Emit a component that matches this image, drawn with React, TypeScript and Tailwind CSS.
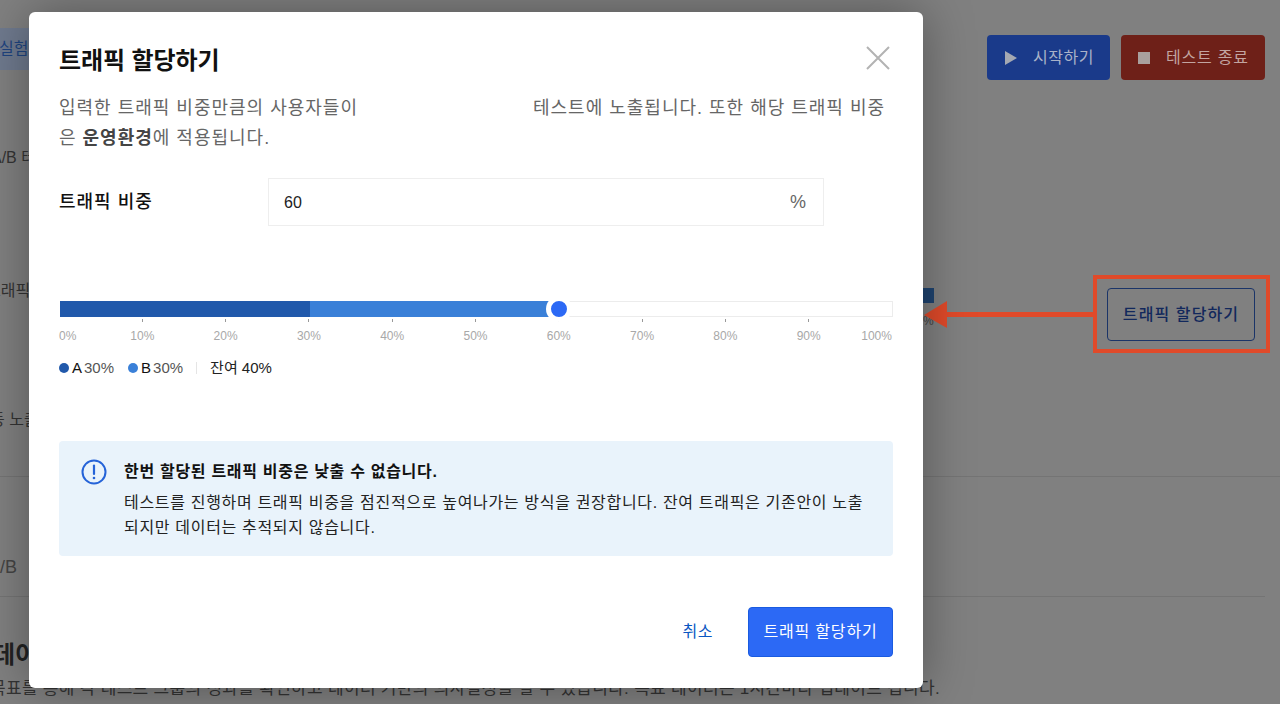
import React from "react";

const ticks = ["0%","10%","20%","30%","40%","50%","60%","70%","80%","90%","100%"];

function Scale() {
  return (
    <div className="flex justify-between w-[833px] mt-[2px]">
      {ticks.map((t, i) => (
        <div key={t} className={"w-0 flex flex-col " + (i === 0 ? "items-start" : i === 10 ? "items-end" : "items-center")}>
          <div className={"w-[1px] h-[3px] bg-[#999] " + (i === 0 || i === 10 ? "opacity-0" : "")} />
          <div className={"text-[12px] leading-[16px] mt-[6px] text-[#a8a8a8] whitespace-nowrap " + (i === 0 ? "ml-[0px]" : "")}>{t}</div>
        </div>
      ))}
    </div>
  );
}

export default function App() {
  return (
    <div className="relative w-[1280px] h-[704px] overflow-hidden bg-[#808080] font-['Liberation_Sans','Noto_Sans_CJK_KR',sans-serif]">
      {/* page behind the dim layer */}
      <div className="h-[704px] flex flex-col text-[#2b2b2b] whitespace-nowrap">
        <div className="flex justify-between items-start pt-[28px] h-[142px] pr-[15px]">
          <div className="h-[42px] w-[40px] bg-[#6f7a8e] text-[#1e4480] text-[16px] leading-[42px] -ml-[1px]">실험</div>
          <div className="flex gap-[11px] mt-[7px]">
            <div className="w-[123px] h-[45px] rounded-[4px] bg-[#1a3a8a] flex items-center pl-[18px] gap-[16px] text-[#a9b2c8] text-[16px] tracking-[0.5px]">
              <svg width="12" height="14" viewBox="0 0 12 14"><path d="M0 0 L12 7 L0 14 Z" fill="#a4a8b2" /></svg>
              <span>시작하기</span>
            </div>
            <div className="w-[144px] h-[45px] rounded-[4px] bg-[#6e2018] flex items-center pl-[17px] gap-[16px] text-[#c2a5a1] text-[16px] tracking-[0.8px]">
              <div className="w-[12px] h-[12px] bg-[#a9a09e]" />
              <span>테스트 종료</span>
            </div>
          </div>
        </div>
        <div className="h-[146px] text-[16px] leading-[32px] -ml-[9px] text-[#333]">A/B 테스트</div>
        <div className="h-[122px] flex justify-between items-start pr-[25px]">
          <div className="text-[16px] leading-[6px] -ml-[14px] text-[#333]">트래픽</div>
          <div className="flex items-start">
            <div className="mr-[173px] flex flex-col items-start">
              <div className="w-[11px] h-[15px] bg-[#1f4470]" />
              <div className="text-[12px] text-[#444] leading-[16px] mt-[10px]">%</div>
            </div>
            <div className="w-[148px] h-[53px] rounded-[4px] border border-[#1b3468] flex items-center justify-center text-[16px] font-medium text-[#12285c] tracking-[1.1px]">트래픽 할당하기</div>
          </div>
        </div>
        <div className="h-[66px] text-[16px] leading-[20px] -ml-[10px] text-[#333]">등 노출</div>
        <div className="h-[120px] border-t border-[#747474] pt-[74px] text-[18px] leading-[32px] text-[#444]">
          <div className="-ml-[12px]">A/B</div>
        </div>
        <div className="border-t border-[#747474] mr-[15px] pt-[40px] text-[24px] leading-[36px] font-bold text-[#222]">
          <div className="-ml-[7px]">데이</div>
          <div className="text-[17px] leading-[24px] font-normal text-[#333] mt-[4px] tracking-[0.3px] -ml-[10px]">
            목표를 통해 각 테스트 그룹의 성과를 확인하고 데이터 기반의 의사결정을 할 수 있습니다. 목표 데이터는 1시간마다 업데이트 됩니다.
          </div>
        </div>
      </div>

      {/* annotation */}
      <div className="absolute left-[1093px] top-[275px] w-[177px] h-[78px] border-[4px] border-[#e04a2a]" />
      <div className="absolute left-[940px] top-[312px] w-[153px] h-[5px] bg-[#e04a2a]" />
      <svg className="absolute left-[924px] top-[301px]" width="24" height="28" viewBox="0 0 24 28"><path d="M0 14 L23 0 L23 27 Z" fill="#e04a2a" /></svg>

      {/* modal */}
      <div className="absolute left-[29px] top-[12px] w-[894px] h-[676px] bg-white rounded-[6px] shadow-[0_0_50px_rgba(0,0,0,0.35)] px-[30px] whitespace-nowrap">
        <div className="flex justify-between items-start pt-[32px]">
          <h2 className="text-[24px] leading-[34px] font-semibold text-[#111] tracking-[-0.1px]">트래픽 할당하기</h2>
          <svg className="mt-[2px] mr-[3px]" width="24" height="24" viewBox="0 0 24 24" fill="none" stroke="#b3b3b3" strokeWidth="2"><path d="M1 1 L23 23 M23 1 L1 23" /></svg>
        </div>
        <div className="mt-[15px] text-[18px] leading-[30px] text-[#666] tracking-[1px]">
          <div className="flex">
            <span>입력한 트래픽 비중만큼의 사용자들이</span>
            <span className="w-[175px]" />
            <span>테스트에 노출됩니다. 또한 해당 트래픽 비중</span>
          </div>
          <div>은 <b className="font-bold text-[#444]">운영환경</b>에 적용됩니다.</div>
        </div>
        <div className="flex items-center mt-[25px]">
          <div className="w-[209px] text-[18px] font-medium text-[#111] tracking-[1px] pt-[1px]">트래픽 비중</div>
          <div className="w-[556px] h-[48px] border border-[#eeeeee] flex items-center justify-between pl-[15px] pr-[17px] text-[16px] pt-[1px]">
            <span className="text-[#222]">60</span>
            <span className="text-[#666] text-[18px]">%</span>
          </div>
        </div>

        <div className="mt-[75px] ml-[1px] relative w-[833px] h-[16px] border border-[#ececec] flex">
          <div className="w-[250px] bg-[#2159ab] -my-[1px] -ml-[1px]" />
          <div className="w-[245px] bg-[#3a80d8] -my-[1px]" />
          <div className="absolute left-[485px] -top-[6px] w-[26px] h-[26px] rounded-full bg-[#2c69f5] border-[5px] border-white" />
        </div>
        <Scale />

        <div className="flex items-center mt-[14px] text-[15px] leading-[20px] text-[#555]">
          <span className="w-[10px] h-[10px] rounded-full bg-[#2159ab]" />
          <span className="ml-[3px] text-[#111]">A</span>
          <span className="ml-[2px]">30%</span>
          <span className="ml-[14px] w-[10px] h-[10px] rounded-full bg-[#3a80d8]" />
          <span className="ml-[3px] text-[#111]">B</span>
          <span className="ml-[2px]">30%</span>
          <span className="ml-[13px] w-[1px] h-[12px] bg-[#e5e5e5]" />
          <span className="ml-[13px] text-[#222]">잔여 40%</span>
        </div>

        <div className="mt-[63px] w-[834px] h-[115px] bg-[#e9f3fb] rounded-[4px] flex pl-[22px] pt-[20px]">
          <svg width="26" height="26" viewBox="0 0 26 26" fill="none" className="shrink-0 -mt-[2px]">
            <circle cx="13" cy="13" r="11.5" stroke="#2563d8" strokeWidth="2" />
            <path d="M13 6.5 V15" stroke="#2563d8" strokeWidth="2.2" strokeLinecap="round" />
            <circle cx="13" cy="19" r="1.3" fill="#2563d8" />
          </svg>
          <div className="ml-[17px] text-[16px] text-[#222]">
            <div className="font-bold leading-[22px] text-[#111] tracking-[0.7px]">한번 할당된 트래픽 비중은 낮출 수 없습니다.</div>
            <div className="leading-[25px] mt-[7px] tracking-[0.68px]">
              테스트를 진행하며 트래픽 비중을 점진적으로 높여나가는 방식을 권장합니다. 잔여 트래픽은 기존안이 노출
              <br />
              되지만 데이터는 추적되지 않습니다.
            </div>
          </div>
        </div>

        <div className="flex justify-end items-center mt-[51px] w-[834px]">
          <span className="text-[16px] text-[#0a57c2] mr-[35px] tracking-[0.5px]">취소</span>
          <div className="w-[145px] h-[50px] rounded-[4px] bg-[#2c69f5] border border-[#1a5be0] text-white text-[16px] flex items-center justify-center tracking-[0.8px]">트래픽 할당하기</div>
        </div>
      </div>
    </div>
  );
}
